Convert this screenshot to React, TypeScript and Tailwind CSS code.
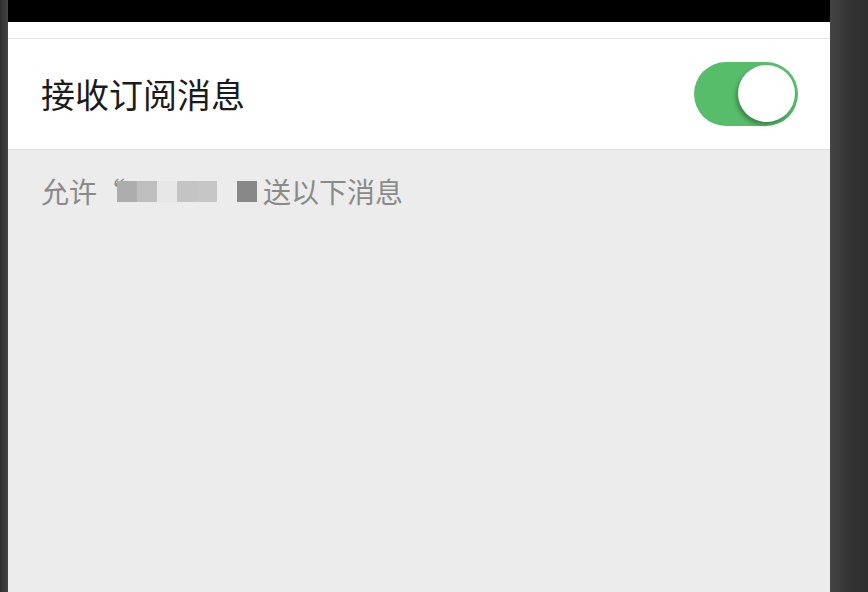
export default function App() {
  return (
    <div className="flex h-[592px] w-[868px] overflow-hidden bg-[#2f2f2f] font-['Noto_Sans_CJK_SC',sans-serif]">
      {/* left frame edge */}
      <div className="w-2 shrink-0 bg-gradient-to-r from-[#2e2e2e] to-[#444]" />

      <div className="flex w-[822px] shrink-0 flex-col bg-[#ececec]">
        {/* status bar */}
        <div className="h-[22px] shrink-0 bg-black" />
        <div className="h-[17px] shrink-0 border-b border-[#e3e3e3] bg-white" />

        {/* setting row */}
        <div className="flex h-[111px] shrink-0 items-center justify-between border-b border-[#e0e0e0] bg-white pl-[33px] pr-[32px]">
          <span className="text-[34px] leading-none text-[#1b1b1b]">接收订阅消息</span>
          <button className="relative h-16 w-[104px] rounded-full bg-[#57bd6a]">
            <span className="absolute right-[3px] top-[3px] h-[57px] w-[57px] rounded-full bg-white shadow-[-2px_3px_4px_rgba(0,0,0,0.3)]" />
          </button>
        </div>

        {/* description */}
        <div className="flex items-center pl-[33px] pt-[27px] text-[28px] leading-none text-[#8a8a8a]">
          <span>允许“</span>
          <span className="ml-[-8px] flex h-[21px]">
            <span className="w-5 bg-[#adadad]" />
            <span className="w-5 bg-[#bebebe]" />
            <span className="w-5 bg-[#e6e6e6]" />
            <span className="w-5 bg-[#c4c4c4]" />
            <span className="w-5 bg-[#c6c6c6]" />
            <span className="w-5" />
            <span className="w-5 bg-[#888]" />
          </span>
          <span className="ml-[6px]">送以下消息</span>
        </div>
      </div>

      {/* right frame edge */}
      <div className="flex-1 bg-gradient-to-r from-[#444] via-[#333] to-[#2e2e2e]" />
    </div>
  );
}
